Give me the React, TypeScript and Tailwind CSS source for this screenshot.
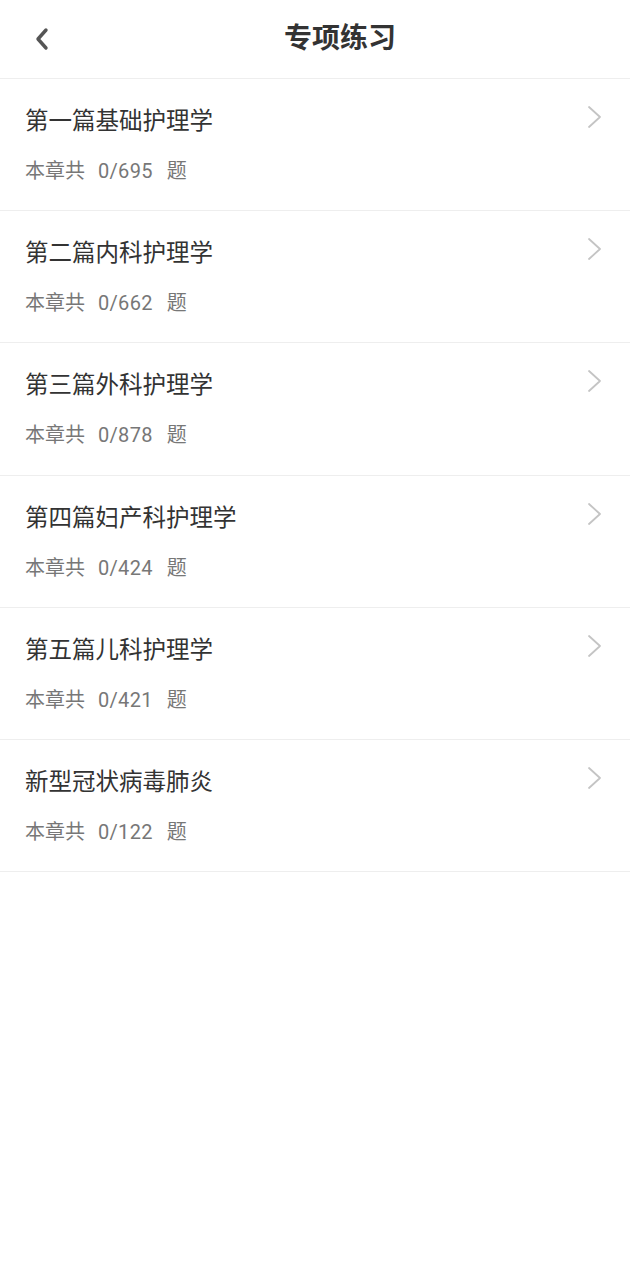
const chapters = [
  { title: '第一篇基础护理学', total: 695 },
  { title: '第二篇内科护理学', total: 662 },
  { title: '第三篇外科护理学', total: 878 },
  { title: '第四篇妇产科护理学', total: 424 },
  { title: '第五篇儿科护理学', total: 421 },
  { title: '新型冠状病毒肺炎', total: 122 },
];

const font = "font-['Roboto','Noto_Sans_CJK_SC',sans-serif]";

export default function App() {
  return (
    <div className={`min-h-[1280px] w-[630px] bg-white ${font}`}>
      {/* 顶部栏 */}
      <div className="flex h-[79px] items-center border-b border-[#eeeeee]">
        <button className="flex h-full w-[50px] items-center justify-end">
          <svg width="16" height="24" viewBox="0 0 16 24" className="mb-[1px]">
            <path d="M12 3 L4 12 L12 21" fill="none" stroke="#555" strokeWidth="3.4" strokeLinecap="round" strokeLinejoin="round" />
          </svg>
        </button>
        <h1 className="mb-[1px] flex-1 text-center text-[28px] font-bold text-[#333]">专项练习</h1>
      </div>

      <div>
        {chapters.map((c) => (
          <ChapterRow key={c.title} title={c.title} total={c.total} />
        ))}
      </div>
    </div>
  );
}

function ChapterRow({ title, total }: { title: string; total: number }) {
  return (
    <div className="flex h-[132.2px] justify-between border-b border-[#eeeeee] pl-[25px] pr-[27px]">
      <div className="pt-[26px]">
        <div className="text-[23.5px] leading-[32px] text-[#333]">{title}</div>
        <div className="mt-[20px] flex text-[20px] leading-[28px] text-[#777]">
          <span>本章共</span>
          <span className="ml-[13px] tracking-[0.3px]">0/{total}</span>
          <span className="ml-[14px]">题</span>
        </div>
      </div>
      <svg width="16" height="24" viewBox="0 0 16 24" className="mt-[26px]">
        <path d="M2 2 L13 12 L2 22" fill="none" stroke="#c4c4c4" strokeWidth="1.8" strokeLinecap="round" strokeLinejoin="round" />
      </svg>
    </div>
  );
}
